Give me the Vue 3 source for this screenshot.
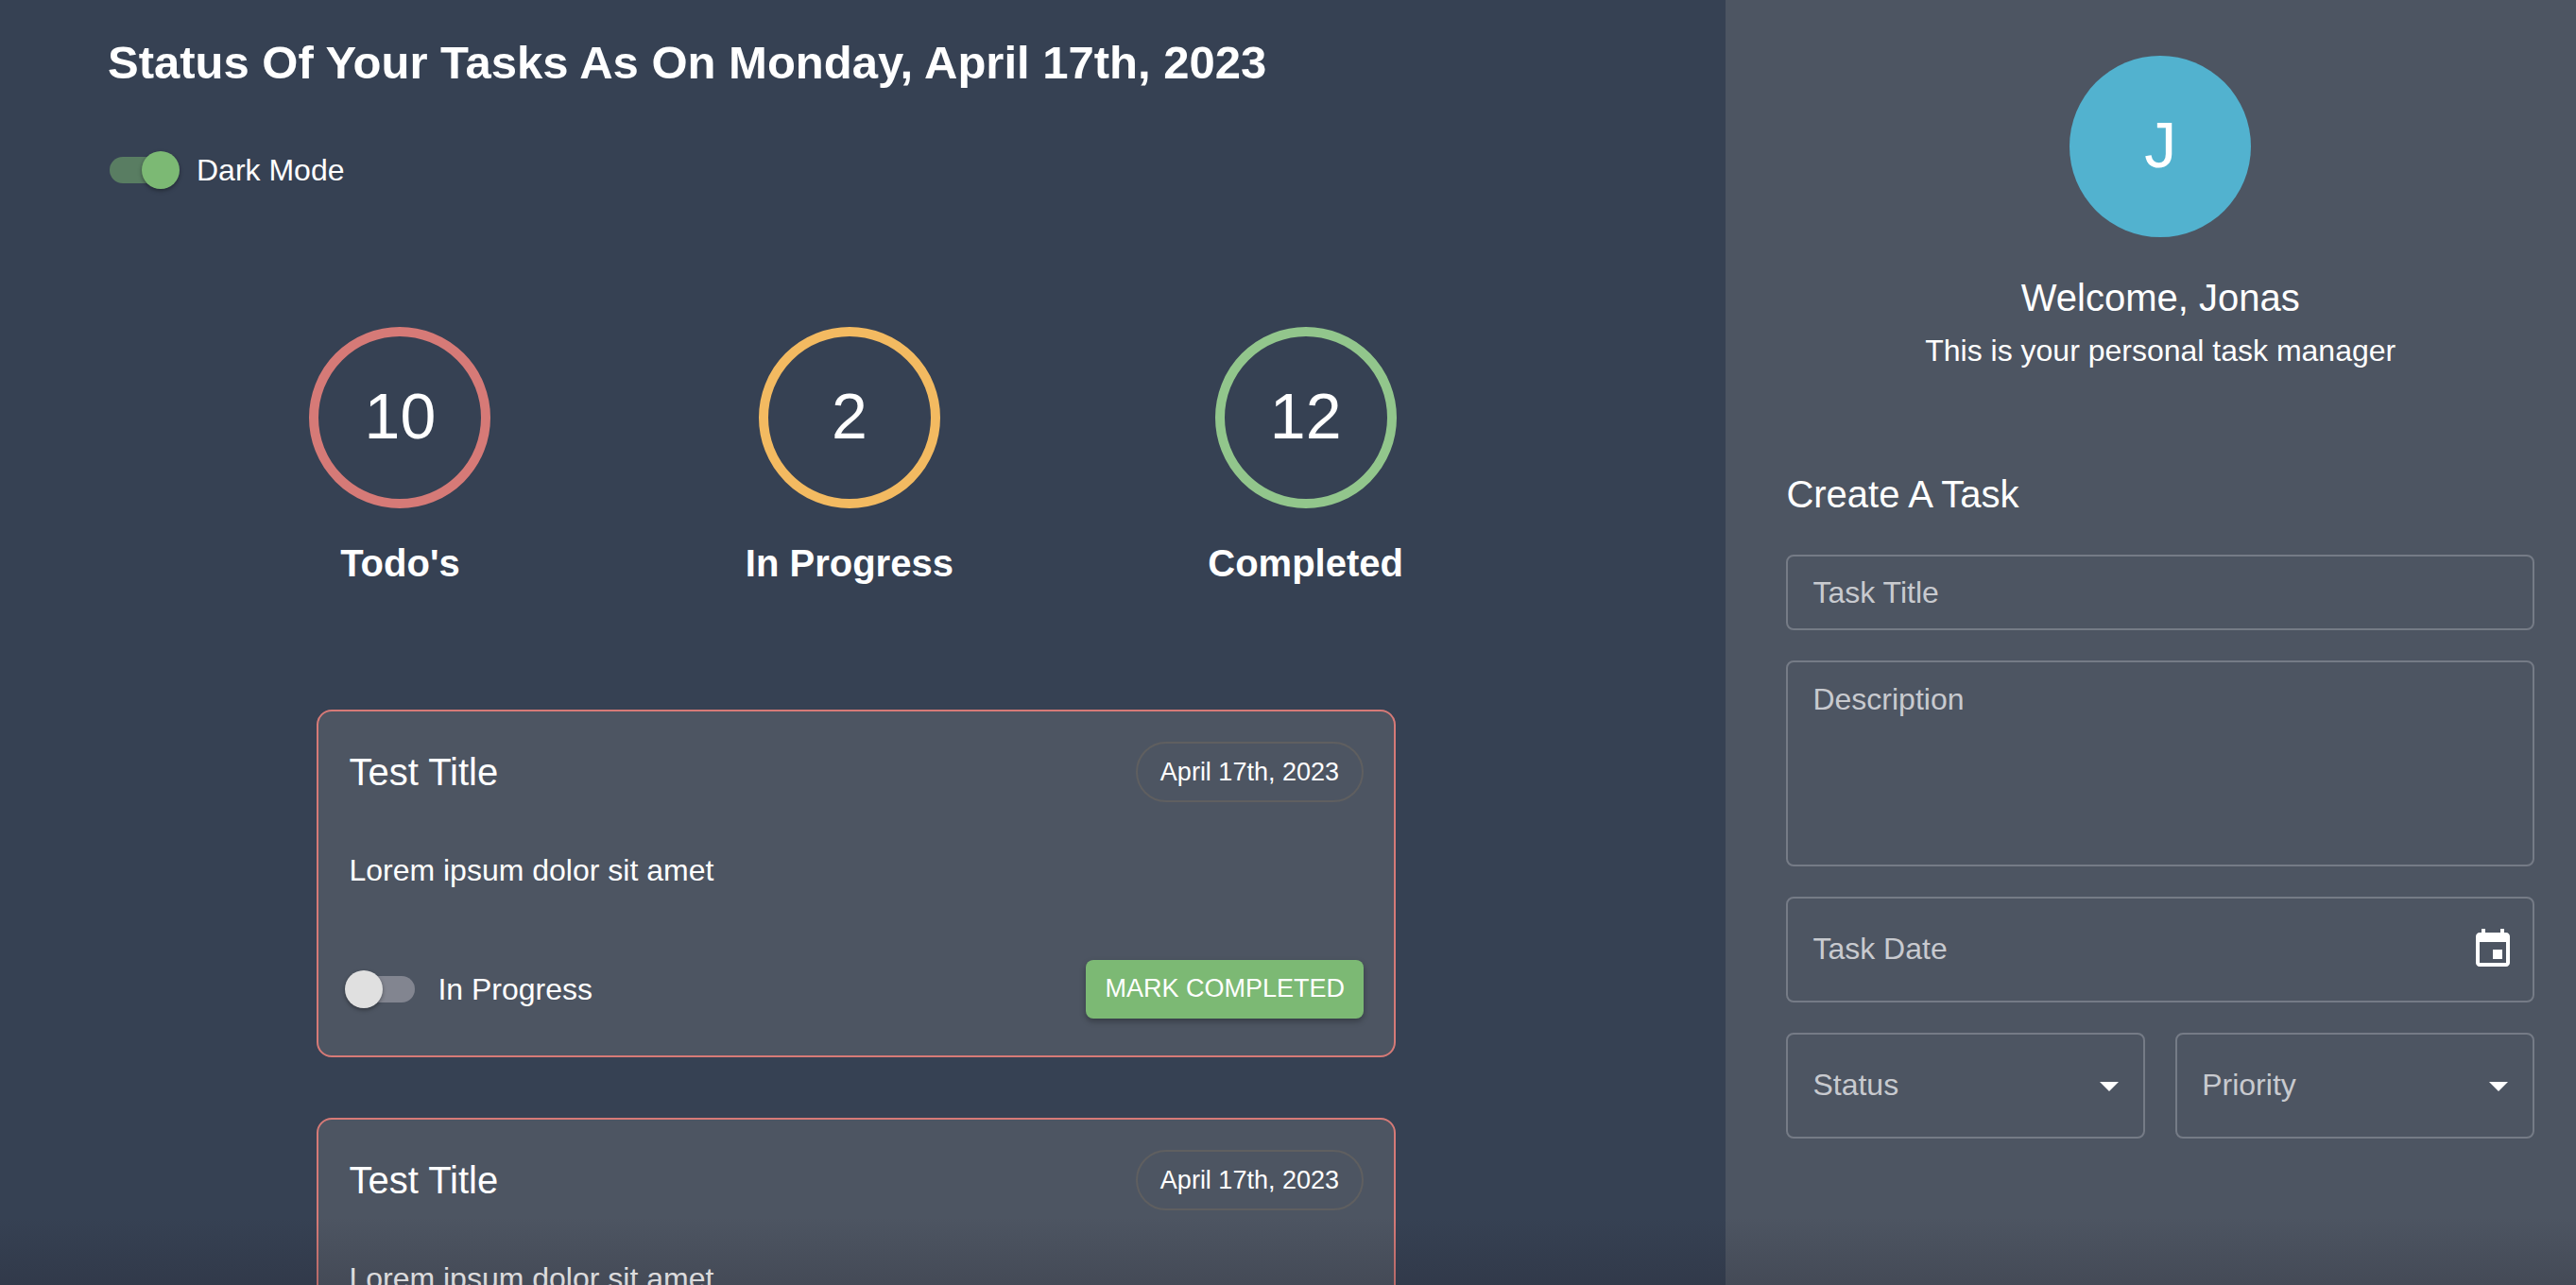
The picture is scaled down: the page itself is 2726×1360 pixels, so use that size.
<script setup>
import { ref, reactive } from 'vue'

const darkMode = ref(true)

const counters = [
  { count: 10, label: "Todo's", status: 'todo' },
  { count: 2, label: 'In Progress', status: 'progress' },
  { count: 12, label: 'Completed', status: 'completed' },
]

const tasks = reactive([
  { id: 1, title: 'Test Title', date: 'April 17th, 2023', description: 'Lorem ipsum dolor sit amet', inProgress: false },
  { id: 2, title: 'Test Title', date: 'April 17th, 2023', description: 'Lorem ipsum dolor sit amet', inProgress: false },
])

const form = reactive({ title: '', description: '', date: '', status: '', priority: '' })
</script>

<template>
  <div class="layout">
    <main class="board">
      <header class="head">
        <h1>Status Of Your Tasks As On Monday, April 17th, 2023</h1>
        <label class="toggle">
          <input v-model="darkMode" type="checkbox" class="switch" />
          <span>Dark Mode</span>
        </label>
      </header>

      <section class="counters">
        <div v-for="c in counters" :key="c.label" class="counter">
          <div class="ring" :class="c.status">{{ c.count }}</div>
          <h2>{{ c.label }}</h2>
        </div>
      </section>

      <section class="tasks">
        <article v-for="t in tasks" :key="t.id" class="card">
          <div class="row">
            <h3>{{ t.title }}</h3>
            <span class="chip">{{ t.date }}</span>
          </div>
          <p>{{ t.description }}</p>
          <div class="row">
            <label class="toggle">
              <input v-model="t.inProgress" type="checkbox" class="switch" />
              <span>In Progress</span>
            </label>
            <button type="button" class="complete">MARK COMPLETED</button>
          </div>
        </article>
      </section>
    </main>

    <aside class="side">
      <div class="profile">
        <div class="avatar">J</div>
        <h2>Welcome, Jonas</h2>
        <p>This is your personal task manager</p>
      </div>

      <form class="form" @submit.prevent>
        <h2>Create A Task</h2>
        <input v-model="form.title" class="field short" type="text" placeholder="Task Title" aria-label="Task Title" />
        <textarea v-model="form.description" class="field area" placeholder="Description" aria-label="Description"></textarea>
        <div class="wrap">
          <input v-model="form.date" class="field" type="text" placeholder="Task Date" aria-label="Task Date" />
          <button type="button" class="pick" aria-label="Choose date">
            <svg viewBox="0 0 24 24" aria-hidden="true">
              <path d="M17 12h-5v5h5v-5zM16 1v2H8V1H6v2H5c-1.11 0-1.99.9-1.99 2L3 19c0 1.1.89 2 2 2h14c1.1 0 2-.9 2-2V5c0-1.1-.9-2-2-2h-1V1h-2zm3 18H5V8h14v11z" />
            </svg>
          </button>
        </div>
        <div class="pair">
          <div class="wrap">
            <select v-model="form.status" class="field" aria-label="Status">
              <option value="" disabled>Status</option>
              <option value="todo">Todo</option>
              <option value="inProgress">In Progress</option>
            </select>
            <svg class="caret" viewBox="0 0 24 24" aria-hidden="true"><path d="M7 10l5 5 5-5z" /></svg>
          </div>
          <div class="wrap">
            <select v-model="form.priority" class="field" aria-label="Priority">
              <option value="" disabled>Priority</option>
              <option value="low">Low</option>
              <option value="high">High</option>
            </select>
            <svg class="caret" viewBox="0 0 24 24" aria-hidden="true"><path d="M7 10l5 5 5-5z" /></svg>
          </div>
        </div>
      </form>
    </aside>
  </div>
</template>

<style>
body {
  margin: 0;
  background: #364153;
}
</style>

<style scoped>
.layout {
  position: relative;
  display: flex;
  height: 100vh;
  overflow: hidden;
  background: #364153;
  color: #fff;
  font-family: Helvetica, "Liberation Sans", Arial, sans-serif;
  font-size: 32px;
  line-height: 48px;
}
.layout * {
  box-sizing: border-box;
}
.layout::after {
  content: "";
  position: absolute;
  inset: auto 0 0;
  height: 72px;
  background: linear-gradient(to bottom, transparent, rgba(28, 24, 34, 0.18));
  pointer-events: none;
}
h1, h2, h3, p {
  margin: 0;
}
h1, h2, h3 {
  line-height: 64px;
}
.board {
  flex: 0 0 67%;
  padding: 34px 64px 0 50px;
  overflow-y: auto;
  scrollbar-width: none;
}
.head {
  padding: 0 64px;
}
h1 {
  margin-bottom: 44px;
  font-size: 49px;
}
h2, h3 {
  font-size: 40px;
}
.side h2, h3 {
  font-weight: 400;
}
.toggle {
  display: flex;
  align-items: center;
  gap: 18px;
  width: max-content;
  height: 76px;
  margin-left: -4px;
}
.switch {
  position: relative;
  appearance: none;
  width: 80px;
  height: 40px;
  margin: 0;
}
.switch::before {
  content: "";
  position: absolute;
  inset: 6px;
  border-radius: 14px;
  background: #828590;
}
.switch::after {
  content: "";
  position: absolute;
  top: 0;
  left: 0;
  width: 40px;
  height: 40px;
  border-radius: 50%;
  background: #e0e0e0;
  box-shadow: 0 2px 4px rgba(0, 0, 0, 0.35);
}
.switch:checked::before {
  background: #597d62;
}
.switch:checked::after {
  left: 40px;
  background: #7cb974;
}
.counters {
  display: flex;
  justify-content: space-around;
  width: calc(100% * 10 / 12);
  margin: 128px auto 0;
}
.counter {
  display: flex;
  flex-direction: column;
  align-items: center;
  gap: 26px;
}
.ring, .avatar {
  display: flex;
  align-items: center;
  justify-content: center;
  width: 192px;
  height: 192px;
  padding-bottom: 4px;
  border-radius: 50%;
  color: #fff;
  font-size: 68px;
}
.ring {
  border: 10px solid;
}
.ring.todo {
  border-color: #d67a77;
}
.ring.progress {
  border-color: #f3ba61;
}
.ring.completed {
  border-color: #92c68c;
}
.tasks {
  display: flex;
  flex-direction: column;
  gap: 64px;
  width: calc(100% * 8 / 12);
  margin: 123px auto 64px;
}
.card {
  padding: 32px;
  border: 2px solid #d67a77;
  border-radius: 16px;
  background: #4d5562;
}
.row {
  display: flex;
  align-items: center;
  justify-content: space-between;
}
.card p {
  margin: 48px 0 64px;
}
.chip {
  display: flex;
  align-items: center;
  height: 64px;
  padding: 0 24px;
  border: 2px solid #5f5f60;
  border-radius: 32px;
  font-size: 27px;
}
.complete {
  height: 62px;
  padding: 0 20px 2px;
  border: 0;
  border-radius: 8px;
  background: #7cb974;
  color: #fff;
  font-family: inherit;
  font-size: 27px;
  box-shadow: 0 3px 6px rgba(0, 0, 0, 0.3);
}
.side {
  flex: 1;
  min-width: 0;
  padding: 59px 44px 0 64px;
  background: #4d5562;
}
.profile {
  display: flex;
  flex-direction: column;
  align-items: center;
}
.avatar {
  margin-bottom: 32px;
  background: #52b2cf;
}
.form {
  display: flex;
  flex-direction: column;
  gap: 32px;
  margin-top: 96px;
}
.field {
  display: block;
  width: 100%;
  height: 112px;
  margin: 0;
  padding: 0 26px 2px;
  border: 2px solid #757b86;
  border-radius: 8px;
  outline: 0;
  appearance: none;
  background: transparent;
  color: #c8cacf;
  font: inherit;
}
.field::placeholder {
  color: #c8cacf;
  opacity: 1;
}
.field.short {
  height: 80px;
  padding-bottom: 0;
}
.field.area {
  height: 218px;
  padding: 15px 26px;
  resize: none;
}
.wrap {
  position: relative;
}
.pair {
  display: grid;
  grid-template-columns: 1fr 1fr;
  gap: 32px;
}
.pick {
  position: absolute;
  top: 32px;
  right: 20px;
  width: 48px;
  height: 48px;
  padding: 0;
  border: 0;
  background: none;
}
.pick svg {
  display: block;
  fill: #fff;
}
.caret {
  position: absolute;
  top: 32px;
  right: 14px;
  width: 48px;
  height: 48px;
  fill: #fff;
  pointer-events: none;
}
</style>
